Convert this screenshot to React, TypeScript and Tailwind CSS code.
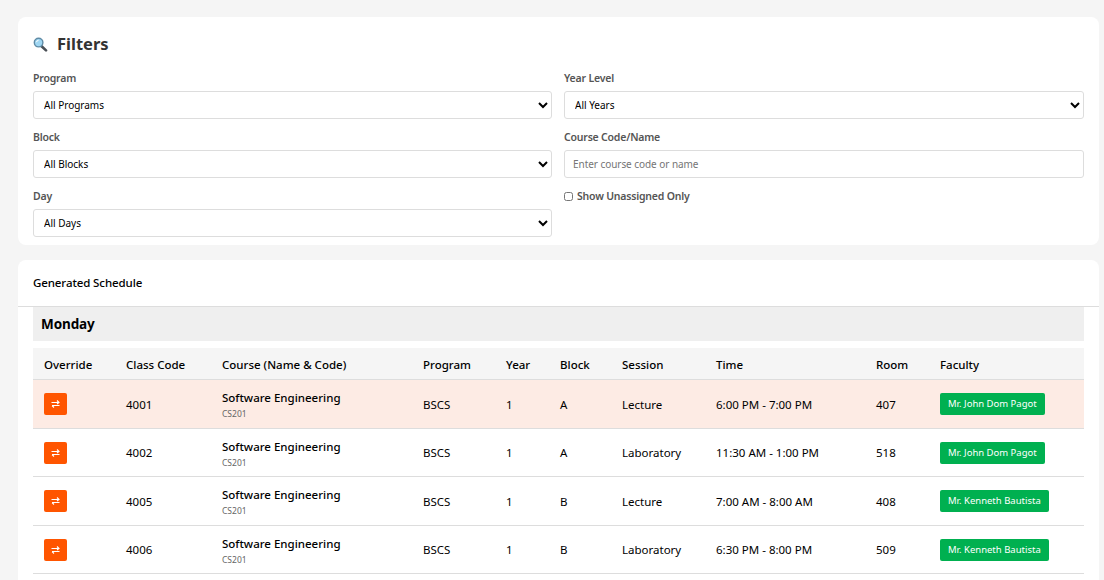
const font = "font-['Noto_Sans',sans-serif]";

const rows = [
  { code: '4001', section: 'A', session: 'Lecture', time: '6:00 PM - 7:00 PM', room: '407', faculty: 'Mr. John Dom Pagot', flagged: true },
  { code: '4002', section: 'A', session: 'Laboratory', time: '11:30 AM - 1:00 PM', room: '518', faculty: 'Mr. John Dom Pagot', flagged: false },
  { code: '4005', section: 'B', session: 'Lecture', time: '7:00 AM - 8:00 AM', room: '408', faculty: 'Mr. Kenneth Bautista', flagged: false },
  { code: '4006', section: 'B', session: 'Laboratory', time: '6:30 PM - 8:00 PM', room: '509', faculty: 'Mr. Kenneth Bautista', flagged: false },
];

const headers = ['Override', 'Class Code', 'Course (Name & Code)', 'Program', 'Year', 'Block', 'Session', 'Time', 'Room', 'Faculty'];

const MagnifierIcon = () => (
  <svg width="15" height="15" viewBox="0 0 15 15" className="shrink-0">
    <path d="M8.6 9.2 L13 13.4" stroke="#4a4f55" strokeWidth="2.6" strokeLinecap="round" />
    <circle cx="5.6" cy="5.6" r="4.3" fill="#9fd6f2" stroke="#5f8ba6" strokeWidth="1.4" />
    <path d="M3.4 5.2 A2.6 2.6 0 0 1 5.6 3.2" stroke="#ffffff" strokeWidth="1" fill="none" />
  </svg>
);

const SwapIcon = () => (
  <svg width="9" height="8" viewBox="0 0 9 8" fill="none" stroke="#ffffff" strokeWidth="1.1">
    <path d="M0.5 2.5 H8 M6 0.5 L8 2.5 L6 4" />
    <path d="M8.5 5.5 H1 M3 7.5 L1 5.5" />
  </svg>
);

const labelClass = 'mb-[5px] block h-[16px] text-[10.5px] leading-[16px] font-semibold tracking-[-0.2px] text-[#555555]';

const FilterSelect = ({ label, value }: { label: string; value: string }) => (
  <div>
    <label className={labelClass}>{label}</label>
    <select className="block h-[28px] w-full rounded-[3px] border border-[#dddddd] bg-white px-[6px] text-[10px] text-black">
      <option>{value}</option>
    </select>
  </div>
);

export default function App() {
  return (
    <div className={`${font} h-[580px] overflow-hidden bg-[#f5f5f5] pt-[17px] pr-[5px] pl-[18px]`}>
      <section className="h-[228px] rounded-lg bg-white px-[15px] pt-[15px]">
        <h2 className="flex h-[25px] items-center gap-[9px] text-[16.5px] font-bold text-[#333333]">
          <MagnifierIcon />
          Filters
        </h2>
        <div className="mt-[13px] grid grid-cols-[519px_1fr] gap-x-[12px] gap-y-[10px]">
          <FilterSelect label="Program" value="All Programs" />
          <FilterSelect label="Year Level" value="All Years" />
          <FilterSelect label="Block" value="All Blocks" />
          <div>
            <label className={labelClass}>Course Code/Name</label>
            <input
              placeholder="Enter course code or name"
              className="block h-[28px] w-full rounded-[3px] border border-[#dddddd] bg-white px-[8px] text-[10px] tracking-[-0.05px] placeholder:text-[#757575]"
            />
          </div>
          <FilterSelect label="Day" value="All Days" />
          <label className="flex h-[17px] items-center gap-[4px] text-[10.5px] font-semibold tracking-[-0.2px] text-[#555555]">
            <input type="checkbox" className="m-0 mb-[1px] h-[9px] w-[9px]" />
            Show Unassigned Only
          </label>
        </div>
      </section>

      <section className="mt-[15px] rounded-lg bg-white pb-10">
        <div className="flex h-[47px] items-center border-b border-[#dddddd] px-[15px] text-[11.5px] font-medium tracking-[-0.1px] text-black">
          Generated Schedule
        </div>
        <div className="px-[15px]">
          <div className="flex h-[34px] items-center bg-[#efefef] px-2 text-[13.5px] font-bold tracking-[-0.1px] text-black">Monday</div>
          <table className="mt-[7px] w-full table-fixed border-collapse text-left text-[11.5px] text-black">
            <colgroup>
              <col className="w-[82px]" />
              <col className="w-[96px]" />
              <col className="w-[201px]" />
              <col className="w-[83px]" />
              <col className="w-[54px]" />
              <col className="w-[62px]" />
              <col className="w-[94px]" />
              <col className="w-[160px]" />
              <col className="w-[64px]" />
              <col />
            </colgroup>
            <thead>
              <tr className="h-[31px] border-b border-[#dddddd] bg-[#f5f5f5]">
                {headers.map((h) => (
                  <th key={h} className="px-[11px] pt-[2px] font-medium">{h}</th>
                ))}
              </tr>
            </thead>
            <tbody>
              {rows.map((r, i) => (
                <tr
                  key={r.code}
                  className={`border-b border-[#dddddd] ${i % 2 === 0 ? 'h-[49px]' : 'h-[48px]'} ${r.flagged ? 'bg-[#fdebe4]' : 'bg-white'}`}
                >
                  <td className="px-[11px] pt-[1px]">
                    <button className="flex h-[22px] w-[23px] items-center justify-center rounded-[2px] bg-[#ff5500]">
                      <SwapIcon />
                    </button>
                  </td>
                  <td className="px-[11px] pt-[2px]">{r.code}</td>
                  <td className="px-[11px] pt-[3px]">
                    <div className="text-[11.5px] leading-[15px] font-medium">Software Engineering</div>
                    <div className="mt-[3px] text-[8.5px] leading-[12px] text-[#666666]">CS201</div>
                  </td>
                  <td className="px-[11px] pt-[2px]">BSCS</td>
                  <td className="px-[11px] pt-[2px]">1</td>
                  <td className="px-[11px] pt-[2px]">{r.section}</td>
                  <td className="px-[11px] pt-[2px]">{r.session}</td>
                  <td className="px-[11px] pt-[2px]">{r.time}</td>
                  <td className="px-[11px] pt-[2px]">{r.room}</td>
                  <td className="px-[11px] pt-[1px]">
                    <span className="inline-block h-[22px] rounded-[2px] bg-[#00b050] px-[8px] text-[9.5px] leading-[22px] font-normal whitespace-nowrap text-white">
                      {r.faculty}
                    </span>
                  </td>
                </tr>
              ))}
            </tbody>
          </table>
        </div>
      </section>
    </div>
  );
}
